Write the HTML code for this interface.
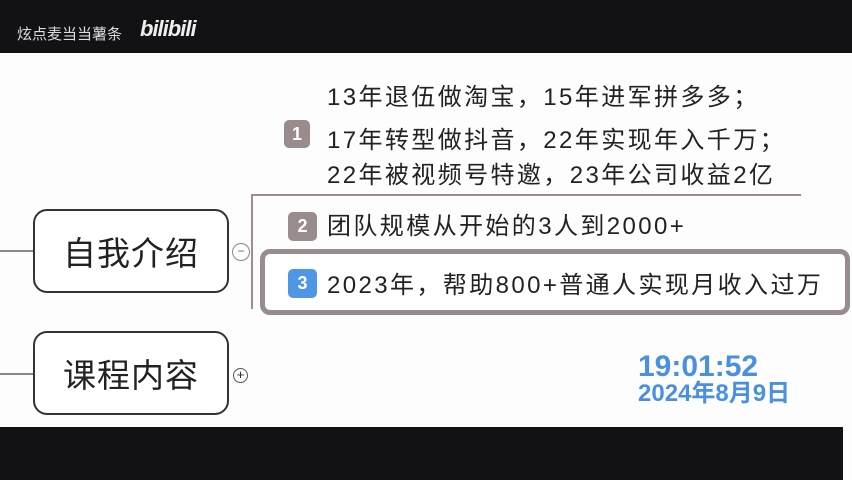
<!DOCTYPE html>
<html><head><meta charset="utf-8"><style>
*{margin:0;padding:0;box-sizing:border-box}
body{width:852px;height:480px;overflow:hidden;background:#fdfdfd;position:relative;font-family:"Liberation Sans","Noto Sans CJK SC",sans-serif}
.a{position:absolute}
.t{color:#222;font-size:24px;letter-spacing:2.4px;white-space:nowrap;line-height:1}
.box{position:absolute;border:2.5px solid #333;border-radius:14px;background:#fff;font-size:33px;color:#222;display:flex;align-items:center;justify-content:center;letter-spacing:1px}
.bd{position:absolute;width:29px;height:29px;border-radius:5px;color:#fff;font-weight:bold;font-size:18px;display:flex;align-items:center;justify-content:center}
</style></head><body>
<div class="a" style="left:0;top:0;width:852px;height:53px;background:#121215"></div>
<div class="a" style="left:17px;top:23px;color:#ddd;font-size:15px">炫点麦当当薯条</div>
<div class="a" style="left:140px;top:16px;color:#eee;font-size:22px;font-weight:bold;font-style:italic;letter-spacing:-1px">bilibili</div>
<div class="a" style="left:0;top:427px;width:843px;height:53px;background:#121215"></div>

<div class="a" style="left:0;top:250px;width:34px;height:2px;background:#888"></div>
<div class="a" style="left:0;top:373px;width:34px;height:2px;background:#888"></div>
<div class="box" style="left:33px;top:209px;width:196px;height:84px">自我介绍</div>
<div class="box" style="left:33px;top:331px;width:196px;height:84px">课程内容</div>
<div class="a" style="left:232px;top:243px;width:18px;height:18px;border:1.5px solid #888;border-radius:50%;font-size:12px;color:#666;text-align:center;line-height:14px">−</div>
<div class="a" style="left:233px;top:368px;width:15px;height:15px;border:1.5px solid #555;border-radius:50%;font-size:13px;color:#222;text-align:center;line-height:12px">+</div>

<div class="a" style="left:251px;top:194px;width:550px;height:2px;background:#9a8e8e"></div>
<div class="a" style="left:251px;top:194px;width:2px;height:115px;background:#9a8e8e"></div>

<div class="t a" style="left:327px;top:86px">13年退伍做淘宝，15年进军拼多多；</div>
<div class="t a" style="left:327px;top:129px">17年转型做抖音，22年实现年入千万；</div>
<div class="t a" style="left:327px;top:164px">22年被视频号特邀，23年公司收益2亿</div>
<div class="bd" style="left:284px;top:120px;width:26px;height:28px;background:#988c8c">1</div>

<div class="bd" style="left:288px;top:212px;background:#988c8c">2</div>
<div class="t a" style="left:327px;top:215px">团队规模从开始的3人到2000+</div>

<div class="a" style="left:260px;top:249px;width:590px;height:66px;border:5px solid #988c8c;border-radius:10px;background:#fff"></div>
<div class="bd" style="left:288px;top:269px;background:#4f96e6">3</div>
<div class="t a" style="left:327px;top:274px">2023年，帮助800+普通人实现月收入过万</div>

<div class="a" style="left:638px;top:352px;color:#4a90e0;font-size:30px;font-weight:bold;line-height:1">19:01:52</div>
<div class="a" style="left:638px;top:382px;color:#4a90e0;font-size:24px;font-weight:bold;line-height:1">2024年8月9日</div>
</body></html>
